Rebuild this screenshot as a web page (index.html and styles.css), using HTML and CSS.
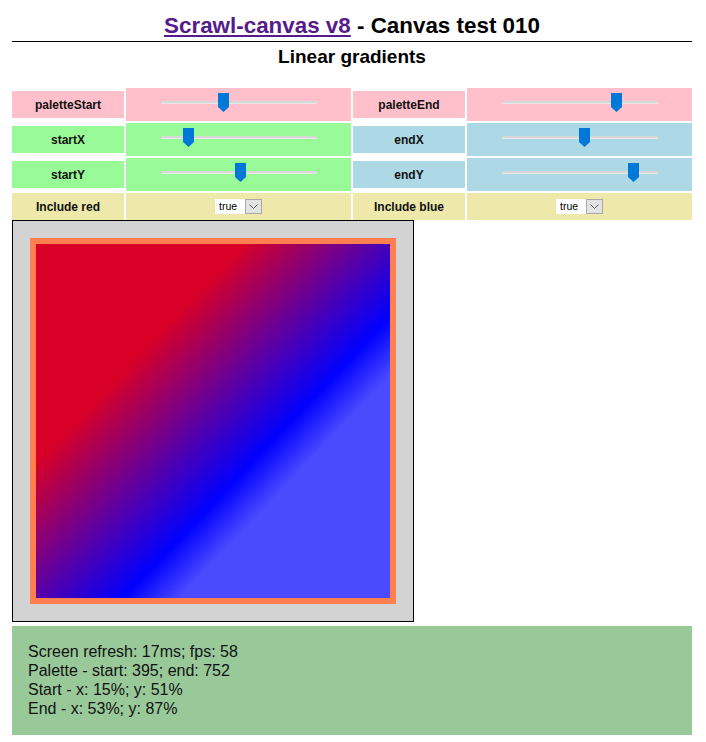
FILE: index.html
```html
<!DOCTYPE html>
<html lang="en">
<head>
<meta charset="utf-8">
<title>Scrawl-canvas v8 - Canvas test 010</title>
<link rel="stylesheet" href="styles.css">
</head>
<body>
<div class="page">
  <h1 class="title"><a href="#" class="home">Scrawl-canvas v8</a> - Canvas test 010</h1>
  <hr class="rule">
  <h2 class="subtitle">Linear gradients</h2>

  <div class="controls">
    <div class="label pink">paletteStart</div>
    <div class="control pink">
      <div class="slider"><div class="track"></div><svg class="thumb" style="left:57px" width="11" height="19" viewBox="0 0 11 19"><path d="M0 0H11V14L5.5 19L0 14Z" fill="#0078d7"/></svg></div>
    </div>
    <div class="label pink">paletteEnd</div>
    <div class="control pink">
      <div class="slider"><div class="track"></div><svg class="thumb" style="left:109px" width="11" height="19" viewBox="0 0 11 19"><path d="M0 0H11V14L5.5 19L0 14Z" fill="#0078d7"/></svg></div>
    </div>

    <div class="label green">startX</div>
    <div class="control green">
      <div class="slider"><div class="track"></div><svg class="thumb" style="left:22px" width="11" height="19" viewBox="0 0 11 19"><path d="M0 0H11V14L5.5 19L0 14Z" fill="#0078d7"/></svg></div>
    </div>
    <div class="label blue">endX</div>
    <div class="control blue">
      <div class="slider"><div class="track"></div><svg class="thumb" style="left:77px" width="11" height="19" viewBox="0 0 11 19"><path d="M0 0H11V14L5.5 19L0 14Z" fill="#0078d7"/></svg></div>
    </div>

    <div class="label green">startY</div>
    <div class="control green">
      <div class="slider"><div class="track"></div><svg class="thumb" style="left:74px" width="11" height="19" viewBox="0 0 11 19"><path d="M0 0H11V14L5.5 19L0 14Z" fill="#0078d7"/></svg></div>
    </div>
    <div class="label blue">endY</div>
    <div class="control blue">
      <div class="slider"><div class="track"></div><svg class="thumb" style="left:126px" width="11" height="19" viewBox="0 0 11 19"><path d="M0 0H11V14L5.5 19L0 14Z" fill="#0078d7"/></svg></div>
    </div>

    <div class="label yellow">Include red</div>
    <div class="control yellow">
      <div class="select"><span class="select-value">true</span><span class="select-btn"><svg width="9" height="5" viewBox="0 0 9 5"><path d="M0.5 0.5L4.5 4.5L8.5 0.5" fill="none" stroke="#606060" stroke-width="1"/></svg></span></div>
    </div>
    <div class="label yellow">Include blue</div>
    <div class="control yellow">
      <div class="select"><span class="select-value">true</span><span class="select-btn"><svg width="9" height="5" viewBox="0 0 9 5"><path d="M0.5 0.5L4.5 4.5L8.5 0.5" fill="none" stroke="#606060" stroke-width="1"/></svg></span></div>
    </div>
  </div>

  <div class="canvas">
    <svg width="400" height="400" viewBox="0 0 400 400">
      <defs>
        <linearGradient id="grad" gradientUnits="userSpaceOnUse" x1="67.3" y1="195.2" x2="210.3" y2="330.8">
          <stop offset="0" stop-color="#d80026"/>
          <stop offset="0.792" stop-color="#0000ff"/>
          <stop offset="1" stop-color="#4a4aff"/>
        </linearGradient>
      </defs>
      <rect x="20" y="20" width="360" height="360" fill="url(#grad)" stroke="#ff7f50" stroke-width="6"/>
    </svg>
  </div>

  <div class="report">
    <div>Screen refresh: 17ms; fps: 58</div>
    <div>Palette - start: 395; end: 752</div>
    <div>Start - x: 15%; y: 51%</div>
    <div>End - x: 53%; y: 87%</div>
  </div>
</div>
</body>
</html>
```

FILE: styles.css
```css
html, body {
  margin: 0;
  padding: 0;
  background: #ffffff;
}

body {
  font-family: "Liberation Sans", Arial, sans-serif;
  color: #000;
}

.page {
  width: 680px;
  margin: 0 12px;
  display: flex;
  flex-direction: column;
}

.title {
  margin: 13px 0 0;
  font-size: 22.4px;
  line-height: 26px;
  font-weight: bold;
  text-align: center;
}

.home {
  color: #551a8b;
  text-decoration: underline;
}

.rule {
  margin: 2px 0 0;
  border: 0;
  border-top: 1px solid #000;
  height: 0;
}

.subtitle {
  margin: 4px 0 0;
  font-size: 19px;
  line-height: 22px;
  font-weight: bold;
  text-align: center;
}

.controls {
  margin-top: 20px;
  display: grid;
  grid-template-columns: 112px 225px 112px 225px;
  grid-template-rows: 33px 33px 33px 27px;
  column-gap: 2px;
  row-gap: 2px;
}

.label {
  align-self: center;
  height: 27px;
  display: flex;
  align-items: center;
  justify-content: center;
  font-size: 12px;
  font-weight: bold;
  color: #111;
}

.control {
  display: flex;
  align-items: center;
  justify-content: center;
}

.pink { background: #ffc0cb; }
.green { background: #98fb98; }
.blue { background: #add8e6; }
.yellow { background: #eee8aa; }

.slider {
  position: relative;
  width: 156px;
  height: 19px;
  margin-bottom: 4px;
}

.track {
  position: absolute;
  left: 0;
  right: 0;
  top: 8px;
  height: 2px;
  background: #d8d8d8;
  box-shadow: 0 1px 0 #e8e8e8;
}

.thumb {
  position: absolute;
  top: 0;
  display: block;
}

.select {
  display: flex;
  height: 15px;
  margin-bottom: 1px;
}

.select-value {
  width: 30px;
  background: #fff;
  font-size: 10.5px;
  line-height: 15px;
  padding-left: 4px;
  box-sizing: border-box;
  color: #000;
}

.select-btn {
  width: 17px;
  height: 15px;
  box-sizing: border-box;
  border: 1px solid #a9a9a9;
  background: #e3e3e3;
  display: flex;
  align-items: center;
  justify-content: center;
  padding-top: 1px;
}

.canvas {
  width: 400px;
  height: 400px;
  border: 1px solid #000;
  background: #d3d3d3;
}

.canvas svg {
  display: block;
}

.report {
  margin-top: 4px;
  background: #99c999;
  padding: 16px 16px 17px;
  font-size: 16px;
  line-height: 19px;
  color: #111;
}
```
